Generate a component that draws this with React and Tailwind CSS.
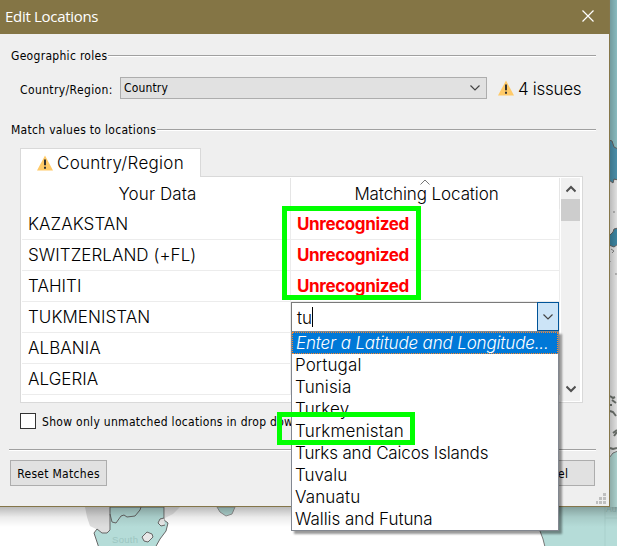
const rows = ["KAZAKSTAN", "SWITZERLAND (+FL)", "TAHITI", "TUKMENISTAN", "ALBANIA", "ALGERIA"];

const options = [
  { name: "Portugal", track: "tracking-[0.1px]" },
  { name: "Tunisia", track: "tracking-[0.1px]" },
  { name: "Turkey", track: "tracking-[0.15px]" },
  { name: "Turkmenistan", track: "tracking-[0.17px]" },
  { name: "Turks and Caicos Islands", track: "tracking-[-0.16px]" },
  { name: "Tuvalu", track: "tracking-normal" },
  { name: "Vanuatu", track: "tracking-[0.15px]" },
  { name: "Wallis and Futuna", track: "tracking-[-0.06px]" },
];

const light = "font-['Inter',sans-serif] font-light tracking-normal text-black";

function Warning() {
  return (
    <svg className="shrink-0" width="16" height="16" viewBox="0 0 16 16">
      <path d="M8 0.5 L16 15.5 H0 Z" fill="#ffca68" />
      <path d="M7 4.5h2v5.8h-2zM7 11.8h2v2h-2z" fill="#333" />
    </svg>
  );
}

function Chevron({ up = false, color = "#444", stroke = 1.2 }) {
  return (
    <svg className={up ? "rotate-180" : ""} width="10" height="10" viewBox="0 0 10 10">
      <path d="M0.5 2.5 L5 7 L9.5 2.5" fill="none" stroke={color} strokeWidth={stroke} />
    </svg>
  );
}

function Rule({ label }) {
  return (
    <div className="flex h-4 items-center gap-px">
      <span className="whitespace-nowrap">{label}</span>
      <div className="h-[2px] flex-1 border-t border-[#a0a0a0] bg-white" />
    </div>
  );
}

function MapBackground() {
  return (
    <svg className="absolute inset-0" width="617" height="546" viewBox="0 0 617 546">
      <defs>
        <linearGradient id="side" x1="0" x2="1">
          <stop offset="0" stopColor="#000" stopOpacity="0.24" />
          <stop offset="1" stopColor="#000" stopOpacity="0.06" />
        </linearGradient>
        <linearGradient id="below" x1="0" y1="0" x2="0" y2="1">
          <stop offset="0" stopColor="#000" stopOpacity="0.27" />
          <stop offset="0.5" stopColor="#000" stopOpacity="0.08" />
          <stop offset="1" stopColor="#000" stopOpacity="0" />
        </linearGradient>
      </defs>
      <path d="M609 0h8v180h-8z" fill="#91c6ca" />
      <path d="M609 180h8v274h-8z" fill="#eee" />
      <path d="M609 140l3 1 2 6 4 2v31l-4-1-1 4-4-3z" fill="#4f97b3" stroke="#666" />
      <path d="M609 236l4-4 1-3 4-1v16l-4 3-5-2z" fill="#3f8ba9" stroke="#666" />
      <path d="M611 249l3 2-2 2M614 211v2M610 261v1M615 274h2" fill="none" stroke="#888" />
      <path d="M610 396l3 2 2-1M612 400l4 3M611 404v2M610 411l3 1 3 4M613 433l4-3M614 436l3-4M610 448l3 1 4-1" fill="none" stroke="#707570" strokeWidth="2" />
      <path d="M609 458l4-5 5-2v96h-73l-2-8-3-8-6-10V500h75z" fill="#b5dcd8" stroke="#777" />
      <path d="M605 507v39M605 518h12" stroke="#a9d0cc" />
      <path d="M85 507h25v27h-7l-7-5-6-3-3-9z" fill="#dedede" />
      <path d="M165 507h15l-7 7-8 4z" fill="#e6e6e6" />
      <path d="M110 507h54v13l4 3-2 8-6 8-5 9H99l-3-9-2-6 3-4 5 4h5l3-3z" fill="#b5dcd8" stroke="#666" />
      <path d="M110 514l2 8 4 1 5-7 3-1 3 2 8-1 5-6 1-3" fill="none" stroke="#666" />
      <path d="M164 518l-4 1-2 4 3 3 4-1" fill="#e8e8e8" stroke="#666" />
      <path d="M142 537l5-5 5 2 1 3-5 5-4-1z" fill="#e8e8e8" stroke="#666" />
      <path d="M217 507l3 5 6 4 6-2 3-7z" fill="#b5dcd8" stroke="#999" />
      <text x="112" y="543" fontSize="9.5" fill="#9cc6c1" fontFamily="Liberation Sans">South</text>
      <text x="606" y="512" fontSize="8.5" fill="#9cc6c1" fontFamily="Liberation Sans" letterSpacing="0">Au</text>
      <path d="M609 0h8v507h-8z" fill="url(#side)" />
      <path d="M0 507h617v20H0z" fill="url(#below)" />
    </svg>
  );
}

function ResizeGrip() {
  return (
    <svg className="absolute right-[3px] bottom-[2px]" width="10" height="11" viewBox="0 0 10 11">
      <path d="M7 0h3v3h-3zM3 4h3v3h-3zM7 4h3v3h-3zM0 8h2v3h-2zM3 8h3v3h-3zM7 8h3v3h-3z" fill="#bfbfbf" />
    </svg>
  );
}

function LocationCombo() {
  return (
    <div className={"absolute top-[302px] left-[291px] w-[268px] text-[17px] " + light}>
      <div className="flex h-[29px] border border-b-0 border-[#7a7a7a] bg-white">
        <div className="flex flex-1 items-center pt-[2px] pl-[5px]">tu<span className="-mt-[2px] h-5 w-px bg-black" /></div>
        <div className="-mt-px -mr-px flex w-[22px] items-center justify-center border border-[#005499] bg-[#cce4f7]"><Chevron /></div>
      </div>
      <div className="border border-[#828790] bg-white shadow-[3px_3px_2px_rgba(0,0,0,0.4)]">
        <div className="flex h-[22px] items-center border border-dotted border-[#ff8728] bg-[#0078d7] pl-[3px] whitespace-nowrap text-white italic tracking-[-0.16px]">Enter a Latitude and Longitude...</div>
        {options.map(({ name, track }) => (
          <div key={name} className="flex h-[22px] items-center pl-[3px] whitespace-nowrap"><span className={track}>{name}</span></div>
        ))}
      </div>
    </div>
  );
}

export default function App() {
  return (
    <div className="relative h-[546px] w-[617px] overflow-hidden bg-white font-['DejaVu_Sans_Condensed','DejaVu_Sans',sans-serif] text-[12px] leading-4 tracking-[0.3px] text-black">
      <MapBackground />
      <div className="relative flex h-[507px] w-[610px] flex-col border-r border-b border-[#85764a] bg-[#efefef]">
        <div className="flex h-[34px] shrink-0 items-center justify-between bg-[#847545] pr-[15px] pb-[3px] pl-[5px] text-white">
          <span className="font-['Open_Sans','Noto_Sans',sans-serif] text-[15px] tracking-[-0.3px]">Edit Locations</span>
          <svg width="12" height="12" viewBox="0 0 12 12"><path d="M0.5 0.5l11 11M11.5 0.5l-11 11" stroke="white" strokeWidth="1.2" /></svg>
        </div>
        <div className="mt-[14px] pr-[13px] pl-[11px]"><Rule label="Geographic roles" /></div>
        <div className="mt-[13px] flex h-[22px] shrink-0 items-center pl-5">
          <span className="w-[100px] pt-[3px] tracking-[0.38px]">Country/Region:</span>
          <div className="flex h-[22px] w-[367px] items-center justify-between border border-[#adadad] bg-[#e1e1e1] pr-1.5 pl-[3px]"><span className="tracking-[0.15px]">Country</span><Chevron /></div>
          <div className={"ml-[11px] flex items-center gap-1 text-[17px] " + light}><Warning /><span className="pt-[2px] tracking-[-0.3px]">4 issues</span></div>
        </div>
        <div className="mt-[23px] pr-[13px] pl-[11px]"><Rule label="Match values to locations" /></div>
        <div className={"z-10 mt-[10px] ml-5 flex h-[29px] w-[181px] shrink-0 items-center gap-1 border border-b-0 border-[#d9d9d9] bg-white pl-4 text-[17px] " + light}><Warning /><span className="tracking-[0.28px]">Country/Region</span></div>
        <div className={"-mt-px ml-5 flex h-[227px] w-[563px] shrink-0 border border-[#d9d9d9] bg-white p-px text-[17px] " + light}>
          <div className="grid w-[538px] grid-cols-[269px_269px] grid-rows-[31px_repeat(6,31px)] content-start overflow-hidden">
            <div className="border-r border-[#e5e5e5] pt-1.5 pl-[3px] text-center leading-5 tracking-[0.1px]">Your Data</div>
            <div className="relative border-r border-[#e5e5e5] pt-1.5 pl-[3px] text-center leading-5 tracking-[-0.1px]">Matching Location<div className="absolute inset-x-0 -top-px flex justify-center"><Chevron up color="#777" stroke={1} /></div></div>
            {rows.map((row, i) => [
              <div key={row} className="flex items-center border-r border-b border-[#ececec] pl-[6px] tracking-[0.05px]">{row}</div>,
              <div key={row + "-match"} className="flex items-center border-r border-b border-[#ececec] pl-[6px] font-bold tracking-[-0.37px] text-[#ff0000]">{i < 3 && "Unrecognized"}</div>,
            ])}
          </div>
          <div className="mx-px flex w-[19px] flex-col items-center bg-[#f0f0f0] pt-[6px] pb-[7px]">
            <Chevron up stroke={2} color="#505050" />
            <div className="mt-[5px] h-[22px] w-[19px] bg-[#cdcdcd]" />
            <div className="flex-1" />
            <Chevron stroke={2} color="#505050" />
          </div>
        </div>
        <div className="mt-[10px] flex h-4 shrink-0 items-center gap-[6px] pl-5"><div className="size-4 border border-[#333] bg-white" /><span className="pt-[2px] whitespace-nowrap">Show only unmatched locations in drop down</span></div>
        <div className="mt-5 mr-[13px] ml-[9px] h-[2px] shrink-0 border-t border-[#a0a0a0] bg-white" />
        <div className="mt-[9px] mr-[14px] ml-[10px] flex shrink-0 justify-between">
          <div className="flex h-[26px] w-[97px] items-center justify-center border border-[#adadad] bg-[#e1e1e1] pt-[2px]">Reset Matches</div>
          <div className="flex h-[26px] w-[92px] items-center justify-center border border-[#adadad] bg-[#e1e1e1] pt-[2px]">Cancel</div>
        </div>
        <ResizeGrip />
      </div>
      <LocationCombo />
      <div className="absolute top-[206px] left-[282px] h-[94px] w-[139px] border-[5px] border-[#00ff00]" />
      <div className="absolute top-[412px] left-[277px] h-[33px] w-[138px] border-[5px] border-[#00ff00]" />
    </div>
  );
}
